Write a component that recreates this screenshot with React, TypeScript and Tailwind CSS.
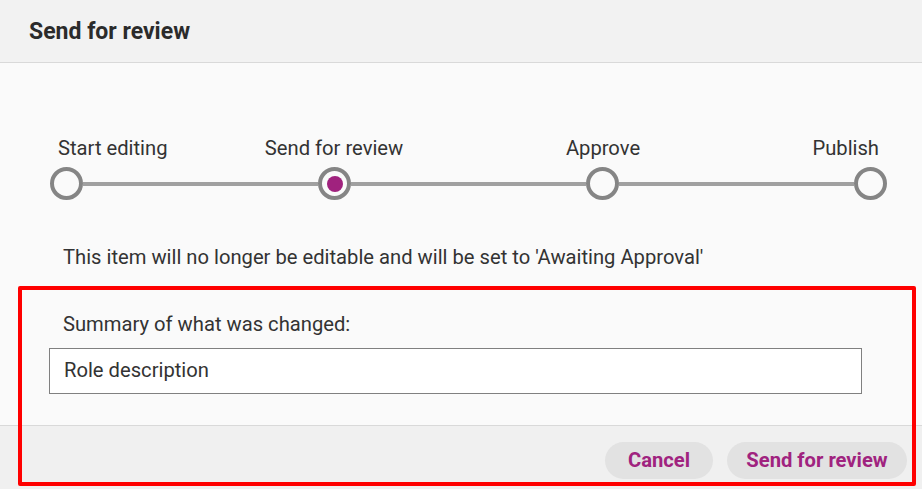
import React from "react";

function Circle({ active }: { active?: boolean }) {
  return (
    <div className="w-[33px] h-[33px] shrink-0 rounded-full border-[4px] border-[#858585] bg-[#fafafa] flex items-center justify-center">
      {active && <div className="w-[16px] h-[16px] rounded-full bg-[#a0227e]" />}
    </div>
  );
}

function Line() {
  return <div className="flex-1 h-[4px] bg-[#a0a0a0]" />;
}

export default function App() {
  return (
    <div
      className="relative w-[922px] h-[489px] flex flex-col bg-[#fafafa] text-[#333333] overflow-hidden"
      style={{ fontFamily: "Roboto, 'Liberation Sans', sans-serif" }}
    >
      <div className="h-[63px] shrink-0 bg-[#f2f2f2] border-b border-[#d9d9d9] flex items-center px-[29px]">
        <h1 className="text-[23px] font-bold text-[#2b2b2b] leading-none">Send for review</h1>
      </div>

      <div className="flex-1 flex flex-col pt-[73px]">
        <div className="ml-[50px] w-[837px] flex text-[20.2px] leading-[24px]">
          <div className="w-[160px] pl-[8px] text-left">Start editing</div>
          <div className="w-[160px] ml-[44px] text-center">Send for review</div>
          <div className="w-[160px] ml-[109px] text-center">Approve</div>
          <div className="w-[160px] ml-[44px] text-right pr-[8px]">Publish</div>
        </div>
        <div className="ml-[50px] w-[837px] mt-[7px] flex items-center">
          <Circle />
          <Line />
          <Circle active />
          <Line />
          <Circle />
          <Line />
          <Circle />
        </div>
        <p className="mt-[45px] ml-[63px] text-[20.2px] leading-[24px]">
          This item will no longer be editable and will be set to 'Awaiting Approval'
        </p>
        <label className="mt-[43px] ml-[63px] text-[20.2px] leading-[24px]">Summary of what was changed:</label>
        <div className="mt-[12px] ml-[49px] w-[813px] h-[46px] bg-white border border-[#808080] flex items-center pl-[14px] pb-[2px] text-[20.2px]">
          Role description
        </div>
      </div>

      <div className="h-[64px] shrink-0 bg-[#f0f0f0] border-t border-[#d9d9d9] flex justify-end items-start pt-[16px] pr-[15px] gap-[14px]">
        <button className="h-[37px] w-[108px] rounded-full bg-[#e2e2e2] text-[#a0237f] font-bold text-[20.2px]">
          Cancel
        </button>
        <button className="h-[37px] w-[180px] rounded-full bg-[#e2e2e2] text-[#a0237f] font-bold text-[20.2px]">
          Send for review
        </button>
      </div>

      <div className="absolute left-[18px] top-[286px] w-[898px] h-[200px] border-[4.5px] border-[#ff0000] rounded-[2px] pointer-events-none" />
    </div>
  );
}
